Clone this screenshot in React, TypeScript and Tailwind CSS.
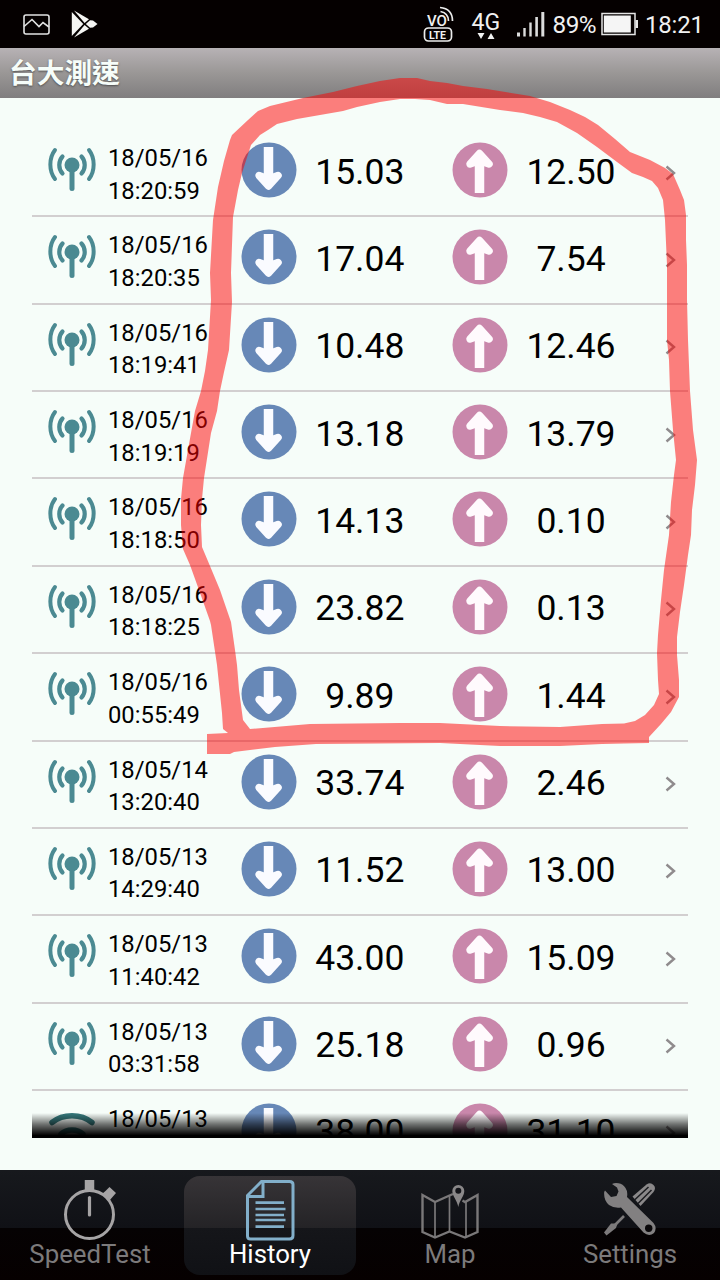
import type { ReactNode } from "react";

type IRecord = {
  date: string;
  time: string;
  download: string;
  upload: string;
  network: "mobile" | "wifi";
};

const records: IRecord[] = [
  { date: "18/05/16", time: "18:20:59", download: "15.03", upload: "12.50", network: "mobile" },
  { date: "18/05/16", time: "18:20:35", download: "17.04", upload: "7.54", network: "mobile" },
  { date: "18/05/16", time: "18:19:41", download: "10.48", upload: "12.46", network: "mobile" },
  { date: "18/05/16", time: "18:19:19", download: "13.18", upload: "13.79", network: "mobile" },
  { date: "18/05/16", time: "18:18:50", download: "14.13", upload: "0.10", network: "mobile" },
  { date: "18/05/16", time: "18:18:25", download: "23.82", upload: "0.13", network: "mobile" },
  { date: "18/05/16", time: "00:55:49", download: "9.89", upload: "1.44", network: "mobile" },
  { date: "18/05/14", time: "13:20:40", download: "33.74", upload: "2.46", network: "mobile" },
  { date: "18/05/13", time: "14:29:40", download: "11.52", upload: "13.00", network: "mobile" },
  { date: "18/05/13", time: "11:40:42", download: "43.00", upload: "15.09", network: "mobile" },
  { date: "18/05/13", time: "03:31:58", download: "25.18", upload: "0.96", network: "mobile" },
  { date: "18/05/13", time: "", download: "38.00", upload: "31.10", network: "wifi" },
];

const Antenna = () => (
  <svg viewBox="0 0 48 44" className="h-11 w-12" fill="none" stroke="#4b8a92" strokeLinecap="round">
    <circle cx="24" cy="18" r="7.5" fill="#4b8a92" stroke="none" />
    <path d="M24 18V41.5" strokeWidth="5" />
    <path d="M14.5 9.5C10.2 14 10.2 22 14.5 26.500M33.5 9.5C37.8 14 37.8 22 33.5 26.500" strokeWidth="4.2" />
    <path d="M7 3C.8 11 .8 24 7 32M41 3C47.200 11 47.200 24 41 32" strokeWidth="4" />
  </svg>
);

const Wifi = () => (
  <svg viewBox="0 0 48 44" className="h-11 w-12" fill="none" stroke="#36797c" strokeLinecap="round">
    <path d="M4 14.500C15 5.500 33 5.500 44 14.500" strokeWidth="5.5" />
    <path d="M13 26C19 20.500 29 20.500 35 26" strokeWidth="5.5" />
    <circle cx="24" cy="35" r="5" fill="#36797c" stroke="none" />
  </svg>
);

const Download = () => (
  <svg viewBox="0 0 56 56" className="h-14 w-14 shrink-0">
    <circle cx="28" cy="28" r="27.5" fill="#6788b7" />
    <path d="M27.500 5V40" stroke="#fafbff" strokeWidth="9.5" />
    <path d="M18 33.500L27.500 44L37 33.500L27.500 37z" fill="#fafbff" stroke="#fafbff" strokeWidth="7.5" strokeLinejoin="round" />
  </svg>
);

const Upload = () => (
  <svg viewBox="0 0 56 56" className="h-14 w-14 shrink-0">
    <circle cx="28" cy="28" r="27.5" fill="#c987ab" />
    <path d="M27.500 16V51" stroke="#fffafd" strokeWidth="9.5" />
    <path d="M18 22L27.500 11.500L37 22L27.500 18.500z" fill="#fffafd" stroke="#fffafd" strokeWidth="7.5" strokeLinejoin="round" />
  </svg>
);

const Row = ({ record }: { record: IRecord }) => (
  <div className="flex h-[87.36px] shrink-0 items-start border-b-2 border-[#d2cfd0] pl-4">
    <div className="mt-[17px] w-12">{record.network === "wifi" ? <Wifi /> : <Antenna />}</div>
    <div className="ml-3 mt-[12px] w-[133.3px] text-[23.8px] leading-[32.5px] text-black">
      <div>{record.date}</div>
      <div>{record.time}</div>
    </div>
    <div className="mt-3">
      <Download />
    </div>
    <div className="mt-[20.5px] w-[125px] text-center text-[35.5px] leading-[42px] text-black">{record.download}</div>
    <div className="ml-[30.2px] mt-3">
      <Upload />
    </div>
    <div className="mt-[20.5px] w-[125px] text-center text-[35.5px] leading-[42px] text-black">{record.upload}</div>
    <svg viewBox="0 0 12 16" className="ml-[32px] mt-[34.5px] h-4 w-3" fill="none" stroke="#8f8b8d" strokeWidth="2.4">
      <path d="M1.500 1.500L9 8L1.500 14.500" />
    </svg>
  </div>
);

const StatusBar = () => (
  <div className="flex h-12 shrink-0 items-center bg-[#050000] text-[#f1f1f1]">
    <svg viewBox="0 0 27 21" className="ml-[22.5px] h-[21px] w-[27px]" fill="none" stroke="#e2e2e2" strokeWidth="1.6">
      <rect x="1" y="1" width="25" height="19" rx="2" />
      <path d="M1 12.500L9 5.500L16 12.500L20 8.500L26 13" />
    </svg>
    <svg viewBox="0 0 27 28" className="ml-[21.5px] h-7 w-[27px]" fill="#f5f5f3">
      <path d="M.8 2V26L12.300 14z" />
      <path d="M3 .5L18 9.300L13.600 13z" />
      <path d="M3 27.500L18 18.700L13.600 15z" />
      <path d="M19 10.300L22 10.600L26.500 14L22 17.400L19 17.700L14.800 14z" />
    </svg>
    <svg viewBox="0 0 32 38" className="ml-[325px] h-[38px] w-8" fill="none" stroke="#ececec" strokeWidth="1.7">
      <text x="4" y="20.500" fontSize="15" fontWeight="500" fill="#f1f1f1" stroke="none" className="font-['Roboto']">VO</text>
      <rect x="1.500" y="23" width="27" height="13" rx="4" />
      <text x="6" y="33.500" fontSize="10.500" fontWeight="700" fill="#f1f1f1" stroke="none" className="font-['Roboto']">LTE</text>
      <path d="M17.500 6.500C22.500 7.500 25.500 11 25.500 16M17 2.500C25 3.200 29.500 8 29.500 16" />
    </svg>
    <svg viewBox="0 0 36 36" className="ml-[15.5px] h-9 w-9" fill="#f1f1f1">
      <text x="0.500" y="24" fontSize="23" className="font-['Roboto']">4G</text>
      <path d="M6.500 27H13.500L10 33zM16.500 33H23.500L20 27z" />
    </svg>
    <svg viewBox="0 0 28 25" className="ml-[10px] h-[25px] w-7" fill="#dcdcdc">
      <rect x="0" y="20.500" width="3" height="4" />
      <rect x="6.300" y="16" width="2.400" height="8.500" />
      <rect x="12.300" y="10.500" width="2.400" height="14" />
      <rect x="18.300" y="5" width="2.600" height="19.500" />
      <rect x="24.300" y="0" width="3" height="24.500" />
    </svg>
    <span className="ml-[8px] w-[45px] whitespace-nowrap pt-px text-[24.3px] leading-12 tracking-[-0.5px]">89%</span>
    <svg viewBox="0 0 38 24" className="ml-[3.5px] h-6 w-[38px]">
      <rect x="1" y="1.500" width="33" height="21" fill="none" stroke="#e6e6e6" strokeWidth="1.5" />
      <rect x="2.800" y="3.500" width="27" height="17" fill="#f5f5f5" />
      <rect x="34.500" y="8" width="2.500" height="8" fill="#e6e6e6" />
    </svg>
    <span className="ml-[6px] pt-px text-[24px] leading-12 tracking-[-0.2px]">18:21</span>
  </div>
);

const Stopwatch = () => (
  <svg viewBox="0 0 54 62" className="h-[62px] w-[54px]" fill="none" stroke="#a6a4a5">
    <circle cx="26.500" cy="35.500" r="24" strokeWidth="3" />
    <path d="M26.500 18.500V36" strokeWidth="3.200" strokeLinecap="round" />
    <path d="M26.500 1V11.500" strokeWidth="9.5" />
    <path d="M39.500 14.500L42.500 12L46.500 8L53 14L49.500 18L46.500 21.500z" fill="#a6a4a5" stroke="none" />
  </svg>
);

const Document = () => (
  <svg viewBox="0 0 50 62" className="h-[62px] w-[50px]" fill="none" stroke="#82afca" strokeWidth="3">
    <path d="M2.500 16.500L16.500 2.500H44.500Q48 2.500 48 5.500V56.500Q48 60 44.500 60H5.500Q2.500 60 2.500 57z" />
    <path d="M18 2.500V17.500H2.500" />
    <path d="M10.500 23.700H39M10.500 30H40.500M10.500 36H39M10.500 41H40.500M10.500 47.700H39" strokeWidth="2.7" />
  </svg>
);

const MapIcon = () => (
  <svg viewBox="0 0 60 62" className="h-[62px] w-[60px]" fill="none" stroke="#7a7879" strokeWidth="2.4">
    <path d="M33 15L29.500 16.500L15 23L2.500 16V53L15 58.500L29.500 52.500L45 58.500L57.500 53V16L45 23L42.500 21.500" />
    <path d="M15 23V58M29.500 17V53M46 23V58" strokeWidth="1.7" />
    <path d="M38.300 28C37 21 32.300 17 32.300 12A6 6 0 0 1 44.300 12C44.300 17 39.600 21 38.300 28z" fill="#8a8889" stroke="none" />
    <circle cx="38.300" cy="11.700" r="3" fill="#131419" stroke="none" />
  </svg>
);

const Tools = () => (
  <svg viewBox="0 0 54 62" className="h-[62px] w-[54px]" fill="none" stroke="#7c7a7b">
    <path d="M29.500 17.500L43.500 5.500Q47.500 3 50.500 6Q53.500 9 50.500 13L37.500 27z" fill="#8a8889" stroke="none" />
    <path d="M31.500 21L45.500 8M35 24.500L48.500 11" stroke="#1b1c20" strokeWidth="1.5" />
    <path d="M21 37L12 46" strokeWidth="2.6" />
    <path d="M8 44.500L14.500 44.500L13 49L3.500 56.500L1 53.500z" fill="#7c7a7b" stroke="none" />
    <path
      d="M9 5Q12 3.500 15.500 4.300Q20 5 22.500 9Q25 12.500 24 18L50.500 44Q54.500 49 51 54Q46 58 40.500 53.500L18 28.500Q11 29.500 6 26Q.5 21.500 1.200 13L2 11.500L8 18L13.500 17L15.500 12.500L14 8.500z"
      fill="#828081"
      stroke="none"
    />
    <circle cx="45.700" cy="49.200" r="3.700" fill="#0a080a" stroke="none" />
  </svg>
);

const Tab = ({ label, active, children }: { label: string; active?: boolean; children: ReactNode }) => (
  <div className="flex flex-1 justify-center pt-1.5">
    <div
      className={`flex h-[99px] w-[172px] flex-col items-center rounded-2xl pt-[3px] ${
        active
          ? "bg-[linear-gradient(180deg,#373437_0px,#242326_52px,#15161a_52px,#101115_99px)] text-white"
          : "text-[#7c7a7b]"
      }`}
    >
      {children}
      <span className="-mt-[2px] text-[25.8px] leading-[30px]">{label}</span>
    </div>
  </div>
);

// hand-drawn marker around the latest measurements
const Marker = () => (
  <svg viewBox="0 0 720 1280" className="pointer-events-none absolute inset-0 h-[1280px] w-[720px]">
    <path
      fill="rgba(255,0,0,0.5)"
      d="M207 734L228 733L223 729L222 713L217 665L211 625L210 621L199 590L190 565L183 549L181 525L181 499L183 478L191 433L195 411L201 391L205 371L208 350L211 300L210 273L213 220L218 187L224 161L230 140L232 135L248 120L258 111L270 106L303 98L333 92L357 86L380 81L400 78L417 78L430 81L447 83L463 86L487 89L530 96L550 102L570 110L585 117L598 125L615 139L630 152L650 160L665 168L673 174L680 190L684 200L686 215L686 240L687 265L687 300L688 340L690 391L693 430L697 460L695 485L692 510L691 535L688 555L684 585L680 612L677 637L677 655L679 680L679 697L671 712L661 724L649 737V743L624 743.500L602 744L560 746L500 746L440 743L316 744L275 747L234 752L230 754H207zM250 729L310 724L400 723L440 723L500 726L560 727L602 724L624 723.500L635 721L645 715L654 705L659 694L658 680L657 653L658 635L661 600L664 570L669 535L671 502L674 475L676 460L673 430L670 391L669 360L667 340L667 300L667 265L665 220L663 200L658 188L652 181L643 177L632 173L617 162L597 147L577 133L557 122L540 117L523 113L500 110L463 104L447 104L430 100L415 99H400L380 102L357 107L343 111L297 119L277 124L268 130L260 135L251 145L242 173L238 190L233 217L231 273L232 302L229 350L224 372L220 391L217 411L211 433L204 478L202 499L201 525L202 547L210 566L220 590L231 622L235 650L237 665L239 690L243 720z"
      fillRule="evenodd"
    />
  </svg>
);

const App = () => {
  return (
    <div className="relative flex h-[1280px] w-[720px] flex-col overflow-hidden bg-[#f6fdf9] font-['Roboto','Noto_Sans_CJK_TC',sans-serif]">
      <StatusBar />
      <div className="flex h-[50px] shrink-0 items-start bg-linear-to-b from-[#b7b2b5] via-[#9a9796] to-[#807e7f] pl-[9px]">
        <h1 className="font-['Noto_Sans_CJK_TC',sans-serif] text-[27.7px] font-bold leading-[46px] text-[#f6fdf9] [text-shadow:0_1px_2px_rgba(50,50,50,0.7)]">
          台大測速
        </h1>
      </div>
      <div className="flex min-h-0 flex-1 p-8">
        <div className="relative flex flex-1 flex-col overflow-hidden">
          {records.map((record) => (
            <Row record={record} key={`${record.date} ${record.time}`} />
          ))}
          <div className="absolute inset-x-0 bottom-0 h-[25px] bg-linear-to-b from-transparent via-black/55 via-45% to-black to-90%" />
        </div>
      </div>
      <div className="flex h-[110px] shrink-0 bg-[linear-gradient(180deg,#17191d_0px,#101116_58px,#050203_58px,#060000_110px)]">
        <Tab label="SpeedTest">
          <Stopwatch />
        </Tab>
        <Tab label="History" active>
          <Document />
        </Tab>
        <Tab label="Map">
          <MapIcon />
        </Tab>
        <Tab label="Settings">
          <Tools />
        </Tab>
      </div>
      <Marker />
    </div>
  );
};

export default App;
